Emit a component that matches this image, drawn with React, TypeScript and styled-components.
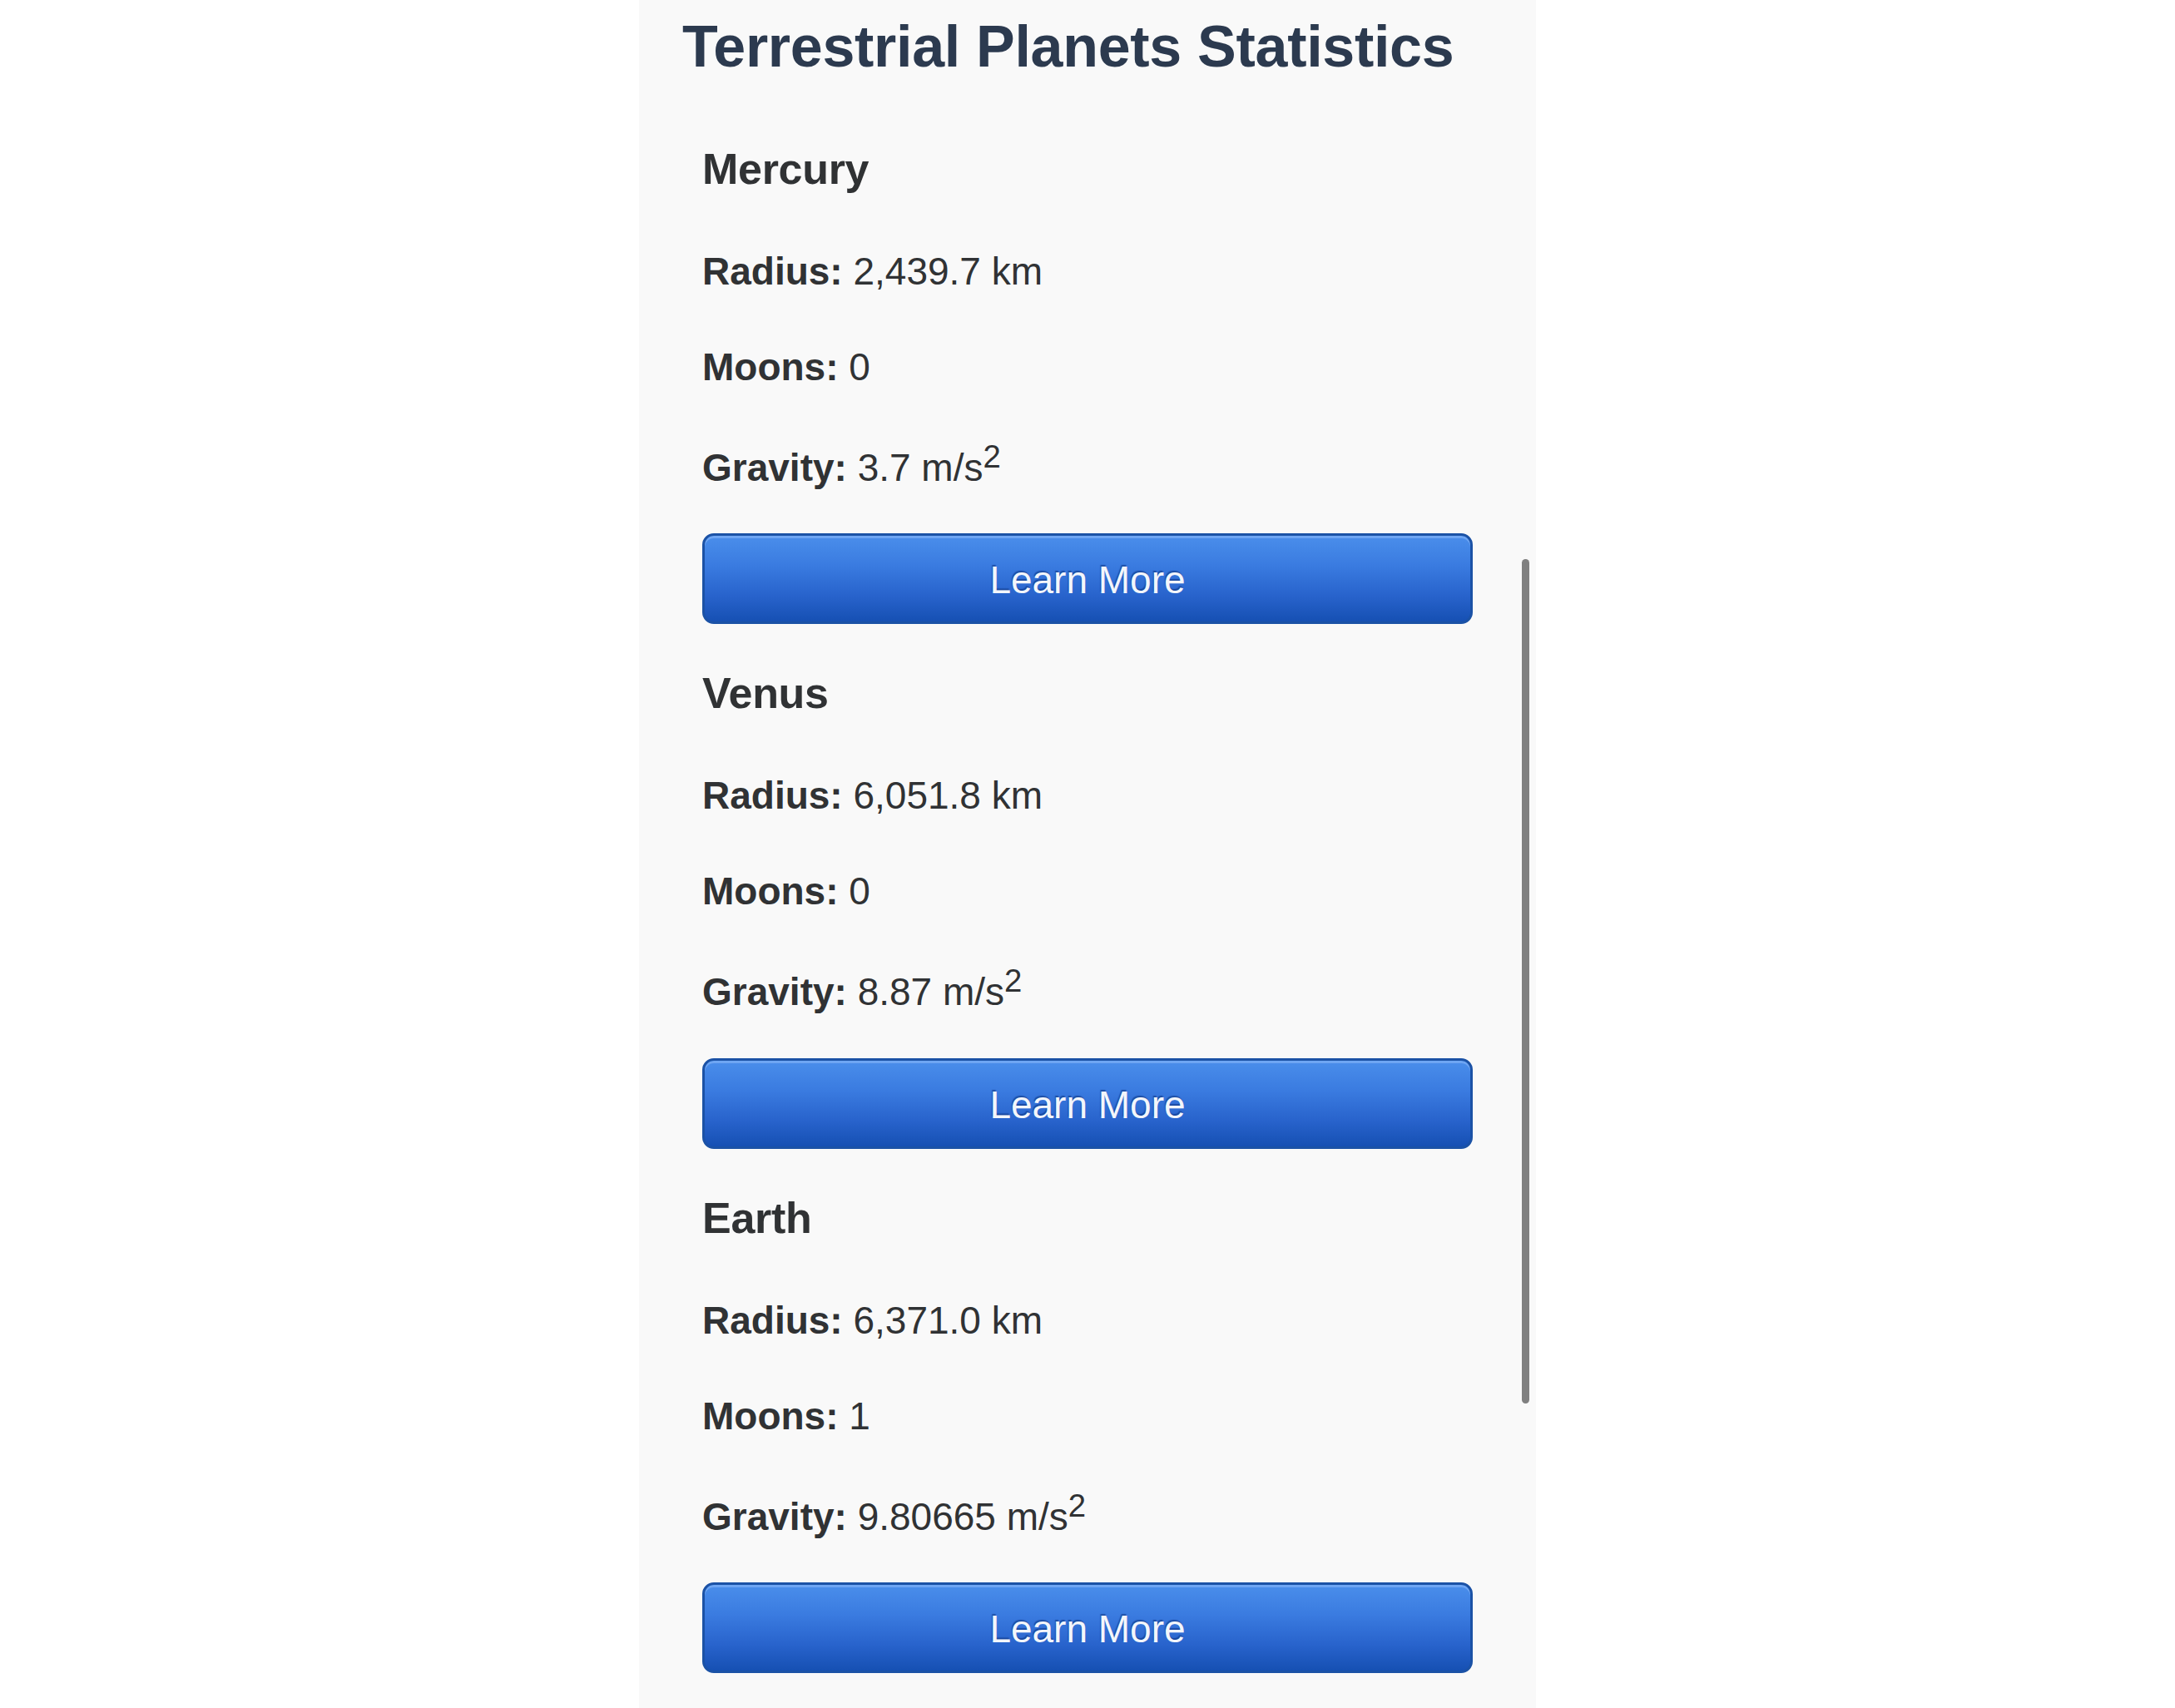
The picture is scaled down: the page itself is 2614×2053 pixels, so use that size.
import React from "react";
import styled, { createGlobalStyle } from "styled-components";

const GlobalStyle = createGlobalStyle`
  html, body {
    margin: 0;
    padding: 0;
    background: #ffffff;
    overflow: hidden;
  }
  body {
    font-family: "Liberation Sans", Helvetica, Arial, sans-serif;
  }
`;

const Page = styled.div`
  display: flex;
  justify-content: center;
  height: 100vh;
  background: #ffffff;
`;

const Viewport = styled.main`
  position: relative;
  width: 1078px;
  height: 100vh;
  overflow: hidden;
  background: #f9f9f9;
`;

const Content = styled.div`
  display: flex;
  flex-direction: column;
  padding: 14px 52px 0;
`;

const Title = styled.h1`
  margin: 0 0 74px;
  font-size: 70px;
  line-height: 84px;
  font-weight: 700;
  letter-spacing: -0.3px;
  color: #2c3a4f;
`;

const Card = styled.section`
  display: flex;
  flex-direction: column;
  margin: 0 24px 52px;
`;

const PlanetName = styled.h3`
  margin: 0 0 65px;
  font-size: 52px;
  line-height: 62px;
  font-weight: 700;
  letter-spacing: -0.3px;
  color: #303234;
`;

const StatList = styled.div`
  display: flex;
  flex-direction: column;
  gap: 60px;
  margin-bottom: 51px;
`;

const StatRow = styled.p`
  margin: 0;
  font-size: 46px;
  line-height: 55px;
  color: #303234;

  strong {
    font-weight: 700;
  }

  sup {
    line-height: 40px;
  }
`;

const LearnButton = styled.button`
  box-sizing: border-box;
  width: 100%;
  height: 109px;
  padding: 3px 0 0;
  border: 3px solid #1b52a6;
  border-radius: 14px;
  background: linear-gradient(to bottom, #4a8eeb 0%, #3a7be0 35%, #2863cc 70%, #1650b3 100%);
  box-shadow: inset 0 3px 0 rgba(140, 185, 250, 0.55);
  font-family: "Liberation Sans", Helvetica, Arial, sans-serif;
  font-size: 46px;
  line-height: 100px;
  color: #f3f6fb;
  text-shadow: -1px -2px 1px rgba(10, 45, 120, 0.55);
  text-align: center;
  cursor: pointer;
`;

const ScrollThumb = styled.div`
  position: absolute;
  top: 672px;
  right: 8px;
  width: 9px;
  height: 1015px;
  border-radius: 5px;
  background: #808080;
`;

type Planet = {
  name: string;
  radius: string;
  moons: number;
  gravity: string;
};

const planets: Planet[] = [
  { name: "Mercury", radius: "2,439.7 km", moons: 0, gravity: "3.7" },
  { name: "Venus", radius: "6,051.8 km", moons: 0, gravity: "8.87" },
  { name: "Earth", radius: "6,371.0 km", moons: 1, gravity: "9.80665" },
];

const PlanetCard: React.FC<{ planet: Planet }> = ({ planet }) => (
  <Card>
    <PlanetName>{planet.name}</PlanetName>
    <StatList>
      <StatRow>
        <strong>Radius:</strong> {planet.radius}
      </StatRow>
      <StatRow>
        <strong>Moons:</strong> {planet.moons}
      </StatRow>
      <StatRow>
        <strong>Gravity:</strong> {planet.gravity} m/s<sup>2</sup>
      </StatRow>
    </StatList>
    <LearnButton type="button">Learn More</LearnButton>
  </Card>
);

export default function App() {
  return (
    <>
      <GlobalStyle />
      <Page>
        <Viewport>
          <Content>
            <Title>Terrestrial Planets Statistics</Title>
            {planets.map((p) => (
              <PlanetCard key={p.name} planet={p} />
            ))}
          </Content>
          <ScrollThumb />
        </Viewport>
      </Page>
    </>
  );
}
